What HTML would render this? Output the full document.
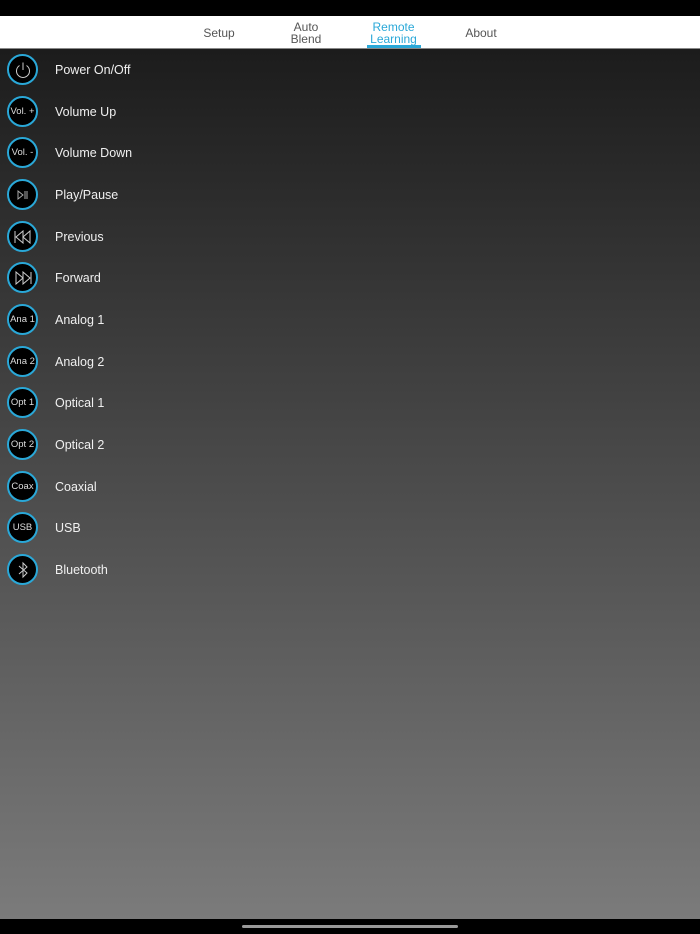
<!DOCTYPE html><html><head><style>
body{margin:0;width:700px;height:934px;overflow:hidden;background:#000;font-family:"Liberation Sans",sans-serif;position:relative}
.top{position:absolute;left:0;top:0;width:700px;height:16px;background:#000}
.nav{position:absolute;left:0;top:16px;width:700px;height:33px;background:#fff;border-bottom:1px solid #888;box-sizing:border-box}
.tab{position:absolute;font-size:12px;color:#555;text-align:center;line-height:12px}
.main{position:absolute;left:0;top:49px;width:700px;height:870px;background:linear-gradient(#1c1c1c,#7b7b7b)}
.row{position:absolute;left:0;height:40px;width:700px}
.c{position:absolute;left:7px;top:5px;width:27px;height:27px;border:2px solid #2aa8d8;border-radius:50%;background:#000;color:#ddd;font-size:9.5px;display:flex;align-items:center;justify-content:center;box-sizing:content-box;white-space:nowrap}
.l{position:absolute;left:55px;top:14px;color:#f0f0f0;font-size:12.5px}
.bot{position:absolute;left:0;top:919px;width:700px;height:15px;background:#000}
.hi{position:absolute;left:242px;top:925px;width:216px;height:3px;border-radius:2px;background:#999}
</style></head><body>
<div class="top"></div>
<div class="nav">
<div class="tab" style="left:193px;top:11px;width:52px">Setup</div>
<div class="tab" style="left:280px;top:5px;width:52px">Auto<br>Blend</div>
<div class="tab" style="left:364px;top:5px;width:59px;color:#2aa8d8">Remote<br>Learning</div>
<div style="position:absolute;left:367px;top:29px;width:54px;height:3px;background:#2aa8d8"></div>
<div class="tab" style="left:454px;top:11px;width:54px">About</div>
</div>
<div class="main">
<div class="row" style="top:0"><div class="c"><svg width="20" height="20" viewBox="0 0 20 20" fill="none" stroke="#ccc" stroke-width="1"><path d="M6.5 5.5A6.5 6.5 0 1 0 13.5 5.5"/><path d="M10 2.5V10"/></svg></div><div class="l">Power On/Off</div></div>
<div class="row" style="top:42px"><div class="c">Vol. +</div><div class="l">Volume Up</div></div>
<div class="row" style="top:83px"><div class="c">Vol. -</div><div class="l">Volume Down</div></div>
<div class="row" style="top:125px"><div class="c"><svg width="14" height="12" viewBox="0 0 14 12" fill="none" stroke="#aaa" stroke-width="1"><path d="M2 2V10L7 6Z"/><path d="M9 2V10M11 2V10"/></svg></div><div class="l">Play/Pause</div></div>
<div class="row" style="top:167px"><div class="c"><svg width="20" height="14" viewBox="0 0 20 14" fill="none" stroke="#ccc" stroke-width="1"><path d="M2 1V13M10 1L3 7L10 13ZM17 1L10 7L17 13Z"/></svg></div><div class="l">Previous</div></div>
<div class="row" style="top:208px"><div class="c"><svg width="20" height="14" viewBox="0 0 20 14" fill="none" stroke="#ccc" stroke-width="1"><path d="M18 1V13M10 1L17 7L10 13ZM3 1L10 7L3 13Z"/></svg></div><div class="l">Forward</div></div>
<div class="row" style="top:250px"><div class="c">Ana 1</div><div class="l">Analog 1</div></div>
<div class="row" style="top:292px"><div class="c">Ana 2</div><div class="l">Analog 2</div></div>
<div class="row" style="top:333px"><div class="c">Opt 1</div><div class="l">Optical 1</div></div>
<div class="row" style="top:375px"><div class="c">Opt 2</div><div class="l">Optical 2</div></div>
<div class="row" style="top:417px"><div class="c">Coax</div><div class="l">Coaxial</div></div>
<div class="row" style="top:458px"><div class="c">USB</div><div class="l">USB</div></div>
<div class="row" style="top:500px"><div class="c"><svg width="12" height="18" viewBox="0 0 12 18" fill="none" stroke="#ccc" stroke-width="1"><path d="M2 5L10 12L6 16V2L10 6L2 13"/></svg></div><div class="l">Bluetooth</div></div>
</div>
<div class="bot"></div><div class="hi"></div>
</body></html>
